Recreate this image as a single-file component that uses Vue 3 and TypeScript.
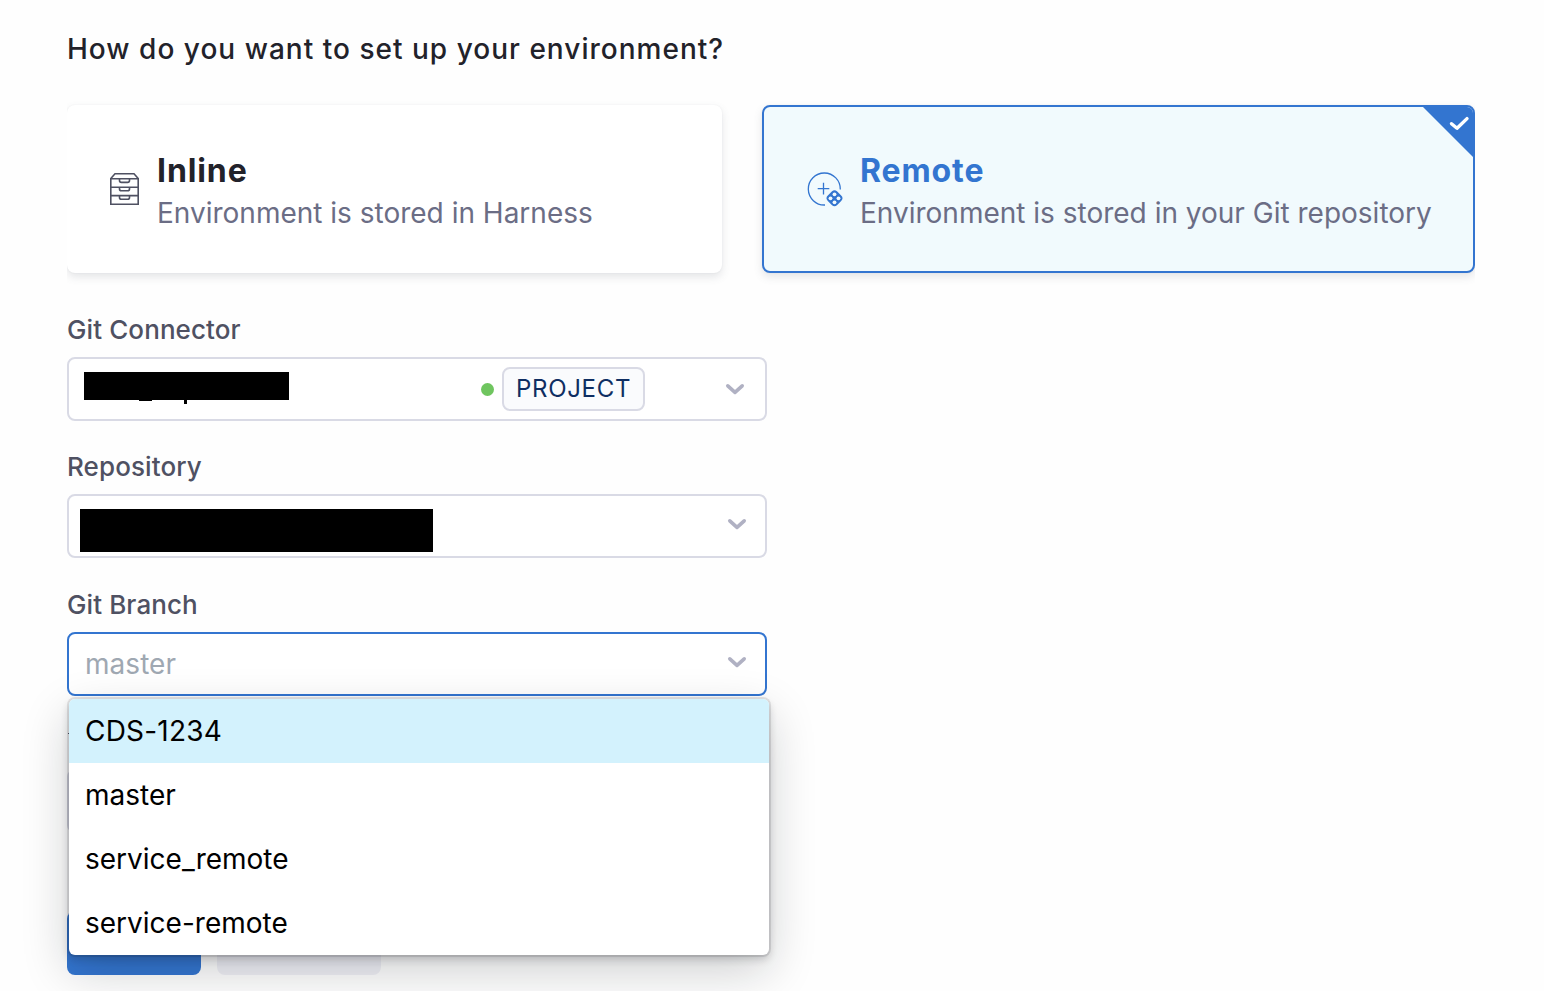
<script setup lang="ts">
interface Field {
  id: string
  label: string
}

const fields: Field[] = [
  { id: 'connector', label: 'Git Connector' },
  { id: 'repository', label: 'Repository' },
  { id: 'branch', label: 'Git Branch' },
]

const branches: string[] = ['CDS-1234', 'master', 'service_remote', 'service-remote']
const active = 'CDS-1234'
</script>

<template>
  <main class="page">
    <h1 class="heading">How do you want to set up your environment?</h1>

    <section class="cards">
      <article class="card inline-card">
        <svg class="icon" width="40" height="40" viewBox="0 0 40 40" fill="none" stroke="#4f5162" stroke-width="1.6">
          <path d="M6.8 10.5V36.2H34.2V10.5M6 10.8H35M6.8 10.5L11 5.8H30L34.2 10.5M6 19.2H35M6 27.6H35" />
          <path d="M15.5 11V12.5Q15.5 14.4 17.4 14.4H23.6Q25.5 14.4 25.5 12.5V11M15.5 19.4V21Q15.5 22.8 17.4 22.8H23.6Q25.5 22.8 25.5 21V19.4M15.5 27.8V29.4Q15.5 31.2 17.4 31.2H23.6Q25.5 31.2 25.5 29.4V27.8" />
        </svg>
        <div class="card-text">
          <h2>Inline</h2>
          <p>Environment is stored in Harness</p>
        </div>
      </article>

      <article class="card remote-card">
        <svg class="icon" width="40" height="40" viewBox="0 0 40 40" fill="none" stroke="#3375d0" stroke-width="1.3">
          <path d="M21 37A16 16 0 1 1 36.3 21.5" />
          <path d="M19.5 14.8V26.4M13.7 20.6H25.3" />
          <rect x="24.5" y="24.3" width="12" height="12" rx="3.2" transform="rotate(45 30.5 30.3)" fill="#3375d0" stroke="#3375d0" />
          <g fill="#f1fafd" stroke="none">
            <circle cx="30.5" cy="26.3" r="1.9" />
            <circle cx="26.5" cy="30.3" r="1.9" />
            <circle cx="34.5" cy="30.3" r="1.9" />
            <circle cx="30.5" cy="34.3" r="1.9" />
          </g>
        </svg>
        <div class="card-text">
          <h2>Remote</h2>
          <p>Environment is stored in your Git repository</p>
        </div>
        <svg class="corner" width="50" height="50" viewBox="0 0 50 50">
          <path d="M0 0H50V50Z" fill="#3375d0" />
          <path d="M28.5 16.7L34 21.3L44 11.6" fill="none" stroke="#fff" stroke-width="3.4" stroke-linecap="round" stroke-linejoin="round" />
        </svg>
      </article>
    </section>

    <form class="form">
      <div v-for="field in fields" :key="field.id" class="field">
        <label>{{ field.label }}</label>
        <div class="select" :class="field.id">
          <template v-if="field.id === 'connector'">
            <span class="masked masked-connector"></span>
            <span class="dot"></span>
            <span class="scope">PROJECT</span>
          </template>
          <span v-else-if="field.id === 'repository'" class="masked masked-repository"></span>
          <span v-else class="placeholder">master</span>
          <svg class="chevron" width="20" height="14" viewBox="0 0 20 14" fill="none" stroke="#b0b1c3" stroke-width="3.6" stroke-linecap="round" stroke-linejoin="round">
            <path d="M2.8 3.8L10 10.4L17.2 3.8" />
          </svg>
        </div>
        <ul v-if="field.id === 'branch'" class="menu">
          <li v-for="branch in branches" :key="branch" :class="{ active: branch === active }">{{ branch }}</li>
        </ul>
      </div>
      <div class="field covered">
        <i class="label-edge"></i>
        <div class="select"></div>
      </div>
    </form>

    <footer class="actions">
      <span class="button primary"></span>
      <span class="button secondary"></span>
    </footer>
  </main>
</template>

<style>
body {
  background: #fefefe;
  overflow: hidden;
}
</style>

<style scoped>
.page {
  box-sizing: border-box;
  width: 1544px;
  height: 991px;
  padding: 29px 69px 0 67px;
  overflow: hidden;
  font-family: Inter, 'Liberation Sans', sans-serif;
  background: #fefefe;
}

h1,
h2,
p,
ul {
  margin: 0;
  padding: 0;
}

.heading {
  height: 76px;
  font-size: 28px;
  line-height: 40px;
  font-weight: 500;
  letter-spacing: 1.02px;
  color: #22222a;
  white-space: nowrap;
}

.cards {
  display: flex;
  gap: 40px;
  height: 168px;
  clip-path: inset(-20px 0);
}

.card {
  position: relative;
  display: flex;
  box-sizing: border-box;
  padding: 44px 38px 0;
  border-radius: 8px;
  background: #fff;
  box-shadow: 0 0 2px rgba(40, 41, 61, 0.06), 0 4px 8px rgba(96, 97, 112, 0.16);
}

.inline-card {
  width: 655px;
}

.remote-card {
  width: 713px;
  padding: 42px 40px 0;
  border: 2px solid #3375d0;
  background: #f1fafd;
}

.icon {
  flex: none;
  margin: 19px 13px 0 -1px;
}

.remote-card .icon {
  margin: 19px 16px 0 0;
}

.card-text {
  white-space: nowrap;
}

h2 {
  font-size: 32px;
  line-height: 44px;
  font-weight: 650;
  letter-spacing: 0.9px;
  color: #22222a;
}

.card p {
  font-size: 28px;
  line-height: 40px;
  color: #6b6d85;
}

.remote-card h2 {
  color: #3375d0;
}

.corner {
  position: absolute;
  top: 0;
  right: 0;
  border-top-right-radius: 6px;
}

.form {
  display: flex;
  flex-direction: column;
  gap: 31.4px;
  width: 700px;
  margin-top: 42px;
}

.field {
  position: relative;
  height: 106px;
}

label {
  display: block;
  height: 42px;
  font-size: 26px;
  line-height: 30.4px;
  font-weight: 500;
  letter-spacing: 0.1px;
  color: #4f5162;
}

.select {
  display: flex;
  align-items: center;
  box-sizing: border-box;
  height: 64px;
  padding-left: 16px;
  padding-right: 18px;
  border: 2px solid #d9dae5;
  border-radius: 8px;
  background: #fff;
}

.select.connector {
  padding-left: 15.4px;
  padding-right: 20px;
}

.select.repository {
  padding-left: 11.4px;
}

.select.branch {
  border-color: #3375d0;
}

.masked {
  background: #000;
}

.masked-connector {
  position: relative;
  width: 204.2px;
  height: 28px;
  margin-top: -6px;
}

.masked-connector::before,
.masked-connector::after {
  content: '';
  position: absolute;
  top: 28px;
  left: 55px;
  width: 13px;
  height: 1px;
  background: #000;
}

.masked-connector::after {
  left: 100px;
  width: 3px;
  height: 4px;
}

.masked-repository {
  width: 352.4px;
  height: 43px;
  margin-top: 8px;
}

.dot {
  width: 13px;
  height: 13px;
  margin-left: 192.4px;
  border-radius: 50%;
  background: #6fc55f;
}

.scope {
  box-sizing: border-box;
  width: 143px;
  height: 44px;
  margin-left: 8px;
  padding-left: 12px;
  border: 2px solid #d9dae5;
  border-radius: 8px;
  background: #fafbfd;
  font-size: 24px;
  line-height: 39px;
  letter-spacing: 0.7px;
  color: #0f2e62;
}

.placeholder {
  font-size: 28px;
  letter-spacing: 0.05px;
  color: #9fa8b2;
}

.chevron {
  margin-left: auto;
  margin-top: -4px;
}

.connector .chevron {
  margin-top: 0;
}

.menu {
  position: absolute;
  z-index: 2;
  top: 109.2px;
  left: 2px;
  width: 700px;
  overflow: hidden;
  border-radius: 6px;
  background: #fff;
  box-shadow: 0 0 0 2px rgba(16, 22, 26, 0.1), 0 4px 8px rgba(16, 22, 26, 0.2), 0 16px 48px rgba(16, 22, 26, 0.2);
  list-style: none;
}

.menu li {
  height: 64px;
  padding-left: 16px;
  font-size: 28px;
  line-height: 64px;
  color: #000;
}

.menu li.active {
  letter-spacing: 0.2px;
  background: #d3f2fd;
}

.label-edge {
  display: block;
  width: 2px;
  height: 1px;
  margin: 6px 0 35px 1px;
  background: #4f5162;
}

.actions {
  display: flex;
  gap: 16px;
  margin-top: 77.8px;
}

.button {
  height: 64px;
  border-radius: 8px;
}

.primary {
  width: 134px;
  background: #3375d0;
}

.secondary {
  width: 164px;
  background: #f0f0f6;
}
</style>
